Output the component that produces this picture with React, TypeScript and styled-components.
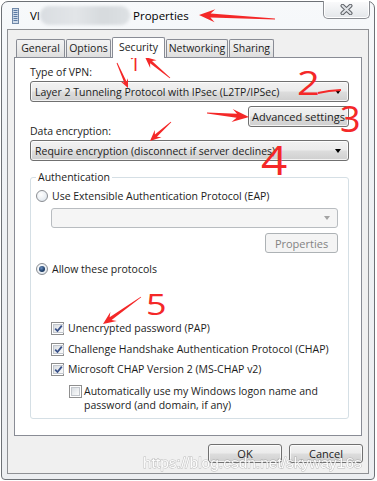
import React from 'react'
import styled, { createGlobalStyle, css } from 'styled-components'

const GlobalStyle = createGlobalStyle`
	html, body {
		margin: 0;
		padding: 0;
		background: #ffffff;
	}
	body {
		font-family: 'Open Sans', 'Noto Sans', sans-serif;
		font-size: 10.5px;
		color: #1c1c1c;
	}
	* {
		box-sizing: border-box;
	}
`

const RED = '#f42828'

const Page = styled.div`
	position: relative;
	width: 377px;
	height: 481px;
	overflow: hidden;
`

const Window = styled.div`
	width: 374px;
	height: 479px;
	margin: 1px 0 0 1px;
	padding: 0 5px 5px;
	display: flex;
	flex-direction: column;
	border: 1px solid #6d7176;
	border-radius: 7px 7px 4px 4px;
	background: linear-gradient(180deg, #f7f9fb 0%, #eff2f5 30%, #eceef1 100%);
`

const TitleBar = styled.div`
	height: 27px;
	display: flex;
	align-items: center;
	padding-left: 5px;
`

const TitleText = styled.div`
	margin-left: 10px;
	font-size: 11.5px;
	color: #000;
	display: flex;
	align-items: center;
`

const Censor = styled.span`
	display: inline-block;
	width: 90px;
	height: 19px;
	margin: 0 3px 0 0;
	border-radius: 9px;
	background: linear-gradient(90deg, #d9dde1, #e2e5e8 40%, #d6dadd 70%, #dde1e4);
	filter: blur(1.5px);
`

const CloseButton = styled.div`
	margin-left: auto;
	margin-right: -1px;
	align-self: flex-start;
	margin-top: -1px;
	width: 47px;
	height: 18px;
	border: 1px solid #8b8e93;
	border-top: none;
	border-radius: 0 0 5px 5px;
	background: linear-gradient(180deg, #fbfbfc 0%, #eef0f2 55%, #e3e6e9 100%);
	box-shadow: inset 0 0 0 1px #ffffff;
	display: flex;
	align-items: center;
	justify-content: center;
`

const Client = styled.div`
	flex: 1;
	display: flex;
	flex-direction: column;
	border: 1px solid #8e9094;
	background: #f0f0f0;
	padding: 7px 6px 0 6px;
`

const TabStrip = styled.div`
	height: 20px;
	display: flex;
	align-items: flex-end;
	gap: 1px;
	padding-left: 2px;
`

const Tab = styled.div<{ $w: number; $active?: boolean }>`
	width: ${(p) => p.$w}px;
	height: 18px;
	border: 1px solid #898c95;
	border-bottom: none;
	border-radius: 2px 2px 0 0;
	background: linear-gradient(180deg, #f3f3f3 0%, #ebebeb 50%, #dedede 100%);
	display: flex;
	align-items: center;
	justify-content: center;
	padding-bottom: 1px;
	${(p) =>
		p.$active &&
		css`
			height: 21px;
			margin-bottom: -1px;
			position: relative;
			z-index: 1;
			background: #ffffff;
			padding-bottom: 3px;
		`}
`

const Panel = styled.div`
	height: 379px;
	border: 1px solid #898c95;
	background: #ffffff;
	padding: 7px 12px 0 15px;
	display: flex;
	flex-direction: column;
`

const FieldLabel = styled.div<{ $top?: number }>`
	line-height: 14px;
	height: 14px;
	margin-top: ${(p) => p.$top ?? 0}px;
`

const buttonFace = css`
	border: 1px solid #707070;
	border-radius: 3px;
	background: linear-gradient(180deg, #f2f2f2 0%, #ebebeb 48%, #dddddd 52%, #cfcfcf 100%);
	box-shadow: inset 0 0 0 1px rgba(255, 255, 255, 0.75);
`

const Combo = styled.div<{ $top: number; $disabled?: boolean }>`
	${buttonFace};
	height: ${(p) => (p.$disabled ? 20 : 21)}px;
	margin-top: ${(p) => p.$top}px;
	display: flex;
	align-items: center;
	padding: 0 5px 0 4px;
	${(p) =>
		p.$disabled &&
		css`
			margin-left: 15px;
			border-color: #b8bcc0;
			background: #f5f5f5;
			box-shadow: none;
		`}
`

const ComboText = styled.span`
	flex: 1;
	white-space: nowrap;
`

const ComboArrow = styled.span<{ $disabled?: boolean }>`
	width: 0;
	height: 0;
	border-left: 3.5px solid transparent;
	border-right: 3.5px solid transparent;
	border-top: 4px solid ${(p) => (p.$disabled ? '#a3a3a3' : '#000000')};
	margin-right: 2px;
`

const Button = styled.div<{ $w: number; $h: number; $top?: number; $disabled?: boolean }>`
	${buttonFace};
	width: ${(p) => p.$w}px;
	height: ${(p) => p.$h}px;
	margin-top: ${(p) => p.$top ?? 0}px;
	display: flex;
	align-items: center;
	justify-content: center;
	white-space: nowrap;
	font-size: 11px;
	${(p) =>
		p.$disabled &&
		css`
			border-color: #adb2b5;
			background: #f4f4f4;
			box-shadow: none;
			color: #838383;
		`}
`

const RightRow = styled.div`
	display: flex;
	justify-content: flex-end;
`

const Group = styled.fieldset`
	margin: 9px 0 0;
	padding: 0 10px 6px 5px;
	border: 1px solid #d5dfe5;
	border-radius: 3px;
	min-width: 0;
	display: flex;
	flex-direction: column;
`

const Legend = styled.legend`
	padding: 0 2px;
	line-height: 14px;
`

const OptionRow = styled.div<{ $top: number; $indent?: number }>`
	display: flex;
	align-items: center;
	gap: 4px;
	height: 16px;
	margin-top: ${(p) => p.$top}px;
	margin-left: ${(p) => p.$indent ?? 0}px;
	white-space: nowrap;
`

const WrapRow = styled.div<{ $top: number; $indent: number }>`
	display: flex;
	align-items: flex-start;
	gap: 2px;
	margin-top: ${(p) => p.$top}px;
	margin-left: ${(p) => p.$indent}px;
	line-height: 14px;
	& > span:first-child {
		margin-top: 1px;
	}
`

const Radio = styled.span<{ $checked?: boolean }>`
	width: 12px;
	height: 12px;
	flex: none;
	border-radius: 50%;
	border: 1px solid #8a8d92;
	background: radial-gradient(circle at 40% 35%, #ffffff 0%, #e8edf2 60%, #cfd8e2 100%);
	display: flex;
	align-items: center;
	justify-content: center;
	&::after {
		content: '';
		display: ${(p) => (p.$checked ? 'block' : 'none')};
		width: 6px;
		height: 6px;
		border-radius: 50%;
		background: radial-gradient(circle at 40% 35%, #6c8fc0 0%, #23446f 55%, #0d2240 100%);
	}
`

const Box = styled.span`
	width: 13px;
	height: 13px;
	flex: none;
	border: 1px solid #8f8f8f;
	padding: 1px;
	background: #fff;
	display: flex;
	& > span {
		flex: 1;
		border: 1px solid #c2c6cc;
		background: linear-gradient(135deg, #d9dde2 0%, #eef0f2 60%, #fafafa 100%);
		display: flex;
		align-items: center;
		justify-content: center;
	}
`

const Footer = styled.div`
	display: flex;
	justify-content: flex-end;
	gap: 7px;
	padding-top: 8px;
	margin-right: -1px;
`

const Overlay = styled.svg`
	position: absolute;
	left: 0;
	top: 0;
	pointer-events: none;
`

const Scribble = styled.text`
	font-family: 'Open Sans', 'DejaVu Sans', sans-serif;
	font-weight: 400;
	fill: ${RED};
`

const Watermark = styled.text`
	font-family: 'Liberation Sans', Arial, sans-serif;
	font-size: 15.5px;
	fill: #ffffff;
	stroke: rgba(120, 120, 120, 0.5);
	stroke-width: 1px;
	paint-order: stroke;
	opacity: 0.85;
`

const Check = () => (
	<svg width='9' height='9' viewBox='0 0 9 9'>
		<path d='M1.2 4.6 L3.5 7 L7.8 1.6' fill='none' stroke='#3a5289' strokeWidth='1.8' />
	</svg>
)

const CheckBox = ({ checked }: { checked?: boolean }) => (
	<Box>
		<span>{checked && <Check />}</span>
	</Box>
)

const DocIcon = () => (
	<svg width='8' height='16' viewBox='0 0 8 16'>
		<rect x='0.5' y='0.5' width='6' height='15' fill='#cfdbe9' stroke='#7088a8' />
		{[2.5, 4.5, 6.5, 8.5, 10.5, 12.5].map((y) => (
			<line key={y} x1='1.5' x2='5.5' y1={y} y2={y} stroke='#5a79a3' strokeWidth='1' />
		))}
	</svg>
)

const CloseGlyph = () => (
	<svg width='13' height='11' viewBox='0 0 13 11'>
		<path d='M2.5 1.8 L10.5 9.2 M10.5 1.8 L2.5 9.2' stroke='#5f6368' strokeWidth='4' strokeLinecap='round' />
		<path d='M2.5 1.8 L10.5 9.2 M10.5 1.8 L2.5 9.2' stroke='#dfe2e6' strokeWidth='2' strokeLinecap='round' />
	</svg>
)

// QQ-style annotation arrow: thin tail widening into a barbed head
const arrow = (x1: number, y1: number, x2: number, y2: number, head = 13, width = 12, shaft = 4) => {
	const len = Math.hypot(x2 - x1, y2 - y1)
	const ux = (x2 - x1) / len
	const uy = (y2 - y1) / len
	const px = -uy
	const py = ux
	const bx = x2 - ux * head
	const by = y2 - uy * head
	const nx = x2 - ux * head * 0.72
	const ny = y2 - uy * head * 0.72
	const pts = [
		[x1 + px * 0.4, y1 + py * 0.4],
		[nx + (px * shaft) / 2, ny + (py * shaft) / 2],
		[bx + (px * width) / 2, by + (py * width) / 2],
		[x2, y2],
		[bx - (px * width) / 2, by - (py * width) / 2],
		[nx - (px * shaft) / 2, ny - (py * shaft) / 2],
		[x1 - px * 0.4, y1 - py * 0.4],
	]
	return pts.map((p) => p.map((v) => v.toFixed(1)).join(',')).join(' ')
}

const ARROWS = [
	arrow(275, 19, 199, 15, 16, 13, 4),
	arrow(170, 78, 145, 57, 11, 10, 3),
	arrow(117, 63, 128, 88, 9, 8, 2.5),
	arrow(207, 113, 249, 117, 17, 13, 4),
	arrow(171, 122, 150, 141, 11, 10, 3),
	arrow(141, 297, 103, 324, 13, 11, 3.5),
]

const tabs = [
	{ label: 'General', w: 49 },
	{ label: 'Options', w: 45 },
	{ label: 'Security', w: 53, active: true },
	{ label: 'Networking', w: 62 },
	{ label: 'Sharing', w: 45 },
]

export default function App() {
	return (
		<Page>
			<GlobalStyle />
			<Window>
				<TitleBar>
					<DocIcon />
					<TitleText>
						VI
						<Censor />
						Properties
					</TitleText>
					<CloseButton>
						<CloseGlyph />
					</CloseButton>
				</TitleBar>

				<Client>
					<TabStrip>
						{tabs.map((t) => (
							<Tab key={t.label} $w={t.w} $active={t.active}>
								{t.label}
							</Tab>
						))}
					</TabStrip>

					<Panel>
						<FieldLabel>Type of VPN:</FieldLabel>
						<Combo $top={2}>
							<ComboText>Layer 2 Tunneling Protocol with IPsec (L2TP/IPSec)</ComboText>
							<ComboArrow />
						</Combo>
						<RightRow>
							<Button $w={101} $h={21} $top={4}>
								Advanced settings
							</Button>
						</RightRow>
						<FieldLabel $top={-3}>Data encryption:</FieldLabel>
						<Combo $top={2}>
							<ComboText>Require encryption (disconnect if server declines)</ComboText>
							<ComboArrow />
						</Combo>

						<Group>
							<Legend>Authentication</Legend>
							<OptionRow $top={4}>
								<Radio />
								Use Extensible Authentication Protocol (EAP)
							</OptionRow>
							<Combo $top={4} $disabled>
								<ComboText />
								<ComboArrow $disabled />
							</Combo>
							<RightRow>
								<Button $w={73} $h={20} $top={5} $disabled>
									Properties
								</Button>
							</RightRow>
							<OptionRow $top={8}>
								<Radio $checked />
								Allow these protocols
							</OptionRow>
							<OptionRow $top={43} $indent={15}>
								<CheckBox checked />
								Unencrypted password (PAP)
							</OptionRow>
							<OptionRow $top={5} $indent={15}>
								<CheckBox checked />
								Challenge Handshake Authentication Protocol (CHAP)
							</OptionRow>
							<OptionRow $top={4} $indent={15}>
								<CheckBox checked />
								Microsoft CHAP Version 2 (MS-CHAP v2)
							</OptionRow>
							<WrapRow $top={7} $indent={33}>
								<CheckBox />
								<span>
									Automatically use my Windows logon name and
									<br />
									password (and domain, if any)
								</span>
							</WrapRow>
						</Group>
					</Panel>

					<Footer>
						<Button $w={74} $h={19}>
							OK
						</Button>
						<Button $w={74} $h={19}>
							Cancel
						</Button>
					</Footer>
				</Client>
			</Window>

			<Overlay width='377' height='481' viewBox='0 0 377 481'>
				{ARROWS.map((pts, i) => (
					<polygon key={i} points={pts} fill={RED} />
				))}
				<Scribble x='129' y='71' fontSize='21'>
					1
				</Scribble>
				<Scribble x='297' y='95' fontSize='32' transform='translate(297 95) scale(1.25 1) translate(-297 -95)'>
					2
				</Scribble>
				<path d='M318 93 L329 91 L341 90' stroke={RED} strokeWidth='2' fill='none' />
				<Scribble x='340' y='132' fontSize='36'>
					3
				</Scribble>
				<Scribble x='261' y='175' fontSize='40' transform='translate(261 175) scale(1.15 1) translate(-261 -175)'>
					4
				</Scribble>
				<Scribble x='146' y='315' fontSize='30' transform='translate(146 315) scale(1.2 1) translate(-146 -315)'>
					5
				</Scribble>
				<Watermark x='143' y='468'>
					https://blog.csdn.net/skyway16s
				</Watermark>
			</Overlay>
		</Page>
	)
}
